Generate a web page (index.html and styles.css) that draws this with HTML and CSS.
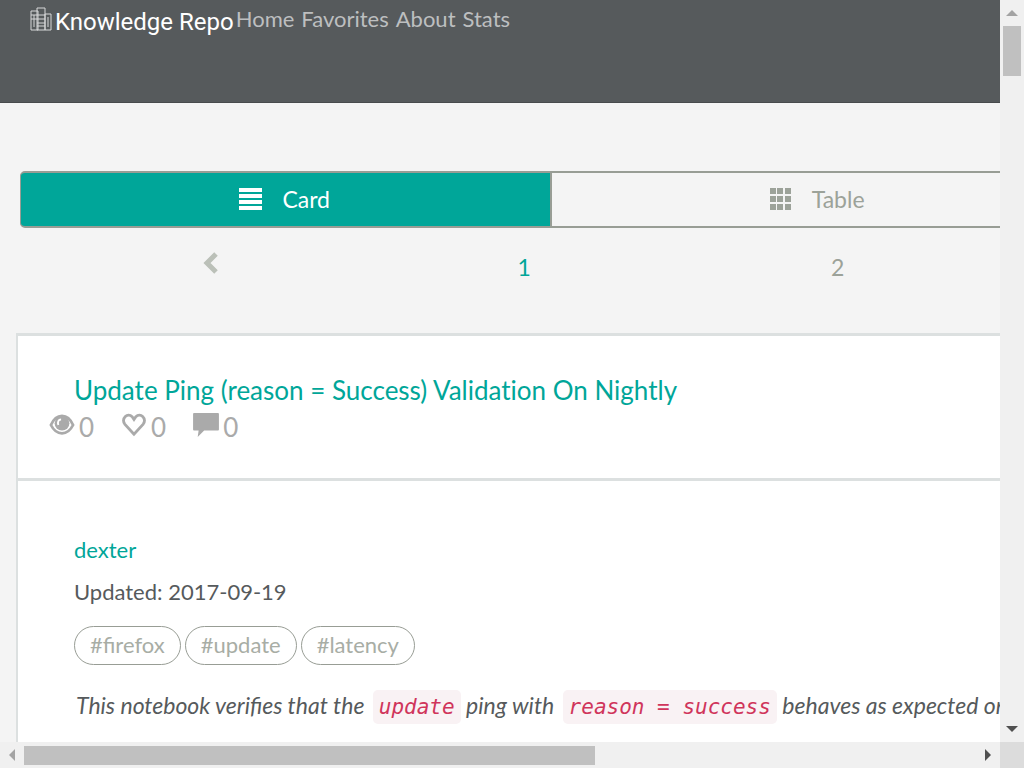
FILE: index.html
```html
<!DOCTYPE html>
<html lang="en">
<head>
<meta charset="utf-8">
<title>Knowledge Repo</title>
<link rel="stylesheet" href="styles.css">
</head>
<body>
<div class="window">
  <div class="page">
    <header class="navbar">
      <a class="brand" href="#">
        <svg class="brand-icon" viewBox="0 0 22 24" aria-hidden="true">
          <path d="M1 4h7v19H1zM7 1h8v22H7zM15 7h6v16h-6zM1 8h14M1 12h14M7 16h8M7 19h8M4 8v12M18 10v10"/>
        </svg>
        <span>Knowledge Repo</span>
      </a>
      <nav class="links">
        <a href="#">Home</a>
        <a href="#">Favorites</a>
        <a href="#">About</a>
        <a href="#">Stats</a>
      </nav>
    </header>
    <main class="content">
      <div class="toggle">
        <button class="view active" type="button">
          <svg class="view-icon" viewBox="0 0 24 24" aria-hidden="true"><path d="M0 1h23v4H0zM0 7h23v4H0zM0 13h23v4H0zM0 19h23v4H0z"/></svg>
          Card
        </button>
        <button class="view" type="button">
          <svg class="view-icon" viewBox="0 0 24 24" aria-hidden="true"><path d="M1 1h6v6H1zM8 1h6v6H8zM16 1h6v6h-6zM1 9h6v6H1zM8 9h6v6H8zM16 9h6v6h-6zM1 17h6v6H1zM8 17h6v6H8zM16 17h6v6h-6z"/></svg>
          Table
        </button>
      </div>
      <nav class="pager" aria-label="Pages">
        <a class="previous" href="#" aria-label="Previous page">
          <svg class="chevron" viewBox="0 0 16 22" aria-hidden="true"><path d="M13 2L4 11l9 9"/></svg>
        </a>
        <a class="current" href="#">1</a>
        <a href="#">2</a>
      </nav>
      <article class="post">
        <div class="post-head">
          <h2 class="post-title"><a href="#">Update Ping (reason = Success) Validation On Nightly</a></h2>
          <ul class="stats">
            <li>
              <svg class="stat-icon" viewBox="0 0 28 26" aria-hidden="true">
                <path fill="none" stroke="currentColor" stroke-width="3" d="M2 13C5 6 9 3 14 3s9 3 12 10c-3 6-7 9-12 9S5 19 2 13z"/>
                <circle cx="14" cy="11" r="8"/>
                <path fill="none" stroke="#fff" stroke-width="2" d="M13 7c-3 0-4 3-3 6"/>
              </svg>0
            </li>
            <li>
              <svg class="stat-icon" viewBox="0 0 28 26" aria-hidden="true">
                <path fill="none" stroke="currentColor" stroke-width="3" d="M14 23L4 12C0 6 7-1 12 4l2 3 2-3c5-5 12 2 8 8z"/>
              </svg>0
            </li>
            <li>
              <svg class="stat-icon" viewBox="0 0 28 26" aria-hidden="true">
                <path d="M1 0h26q1 0 1 1v17q0 1-1 1H12l-7 7 1-7H1q-1 0-1-1V1q0-1 1-1z"/>
              </svg>0
            </li>
          </ul>
        </div>
        <div class="post-body">
          <a class="author" href="#">dexter</a>
          <p class="updated">Updated: 2017-09-19</p>
          <div class="tags"><a href="#">#firefox</a><a href="#">#update</a><a href="#">#latency</a></div>
          <p class="summary">This notebook verifies that the <code>update</code> ping with <code>reason = success</code> behaves as expected on</p>
        </div>
      </article>
    </main>
  </div>
  <div class="scroll vertical">
    <button class="arrow" type="button" aria-label="Scroll up"><svg viewBox="0 0 12 8"><path fill="#a3a3a3" d="M0 7l6-6 6 6z"/></svg></button>
    <div class="track"><div class="thumb"></div></div>
    <button class="arrow" type="button" aria-label="Scroll down"><svg viewBox="0 0 12 8"><path fill="#505050" d="M0 1h12L6 7z"/></svg></button>
  </div>
  <div class="scroll horizontal">
    <button class="arrow" type="button" aria-label="Scroll left"><svg viewBox="0 0 8 12"><path fill="#a3a3a3" d="M7 0v12L1 6z"/></svg></button>
    <div class="track"><div class="thumb"></div></div>
    <button class="arrow" type="button" aria-label="Scroll right"><svg viewBox="0 0 8 12"><path fill="#505050" d="M1 0l6 6-6 6z"/></svg></button>
  </div>
  <div class="corner"></div>
</div>
</body>
</html>
```
FILE: styles.css
```css
* { box-sizing: border-box; }
body {
  margin: 0;
  background: #f4f4f4;
  color: #565a5c;
  font: 22px/32px Lato, sans-serif;
}
a { color: #00a699; text-decoration: none; }
button { font: inherit; cursor: pointer; }
svg { display: block; fill: currentColor; }

.window {
  display: grid;
  grid-template: minmax(0, 1fr) 26px / minmax(0, 1fr) 24px;
  height: 100vh;
}
.page { overflow: hidden; }

.navbar {
  display: flex;
  align-items: flex-start;
  gap: 2px;
  height: 103px;
  padding: 3px 30px;
  background: #565a5c;
  border-bottom: 1px solid #484b4d;
}
.brand {
  display: flex;
  gap: 3px;
  color: #fff;
  font: 24px/32px Roboto, sans-serif;
}
.brand span { padding-top: 3px; }
.brand-icon {
  width: 22px;
  height: 24px;
  margin-top: 4px;
  fill: none;
  stroke: #d6d7d8;
}
.links { display: flex; gap: 7px; }
.links a { color: #bdbfc0; }

.content { padding: 68px 0 0 16px; }

.toggle {
  display: grid;
  grid-template-columns: 54% 54%;
  margin: 0 -6px 0 4px;
}
.view {
  display: flex;
  align-items: center;
  justify-content: center;
  gap: 19px;
  height: 57px;
  padding: 0 2px 2px 0;
  border: 2px solid #989d95;
  border-left-width: 0;
  background: none;
  color: #9ca299;
  font-size: 23px;
}
.view.active {
  border-left-width: 1px;
  border-radius: 5px 0 0 5px;
  background: #00a699;
  color: #fff;
}
.view-icon { width: 24px; height: 24px; }

.pager {
  display: grid;
  grid-template-columns: repeat(3, 33%);
  margin: 23px -4px 0 38px;
  font-size: 23px;
  text-align: center;
}
.pager a { color: #9ca299; }
.pager .current { color: #00a699; }
.previous { display: flex; justify-content: center; }
.chevron {
  width: 16px;
  height: 22px;
  margin-top: 1px;
  fill: none;
  stroke: #bbc0b8;
  stroke-width: 5;
}

.post {
  width: 160%;
  margin-top: 50px;
  border: 2px solid #dce0e0;
  border-top-width: 3px;
  background: #fff;
}
.post-head {
  padding: 36px 31px 33px;
  border-bottom: 3px solid #dce0e0;
}
.post-title {
  margin: 0;
  padding-left: 25px;
  font-size: 26px;
  font-variant-ligatures: none;
  font-weight: 400;
  line-height: 36px;
}
.stats {
  display: flex;
  gap: 27px;
  margin: 0;
  padding: 1px 0 0;
  color: #aaa;
  font-size: 26px;
  line-height: 36px;
  list-style: none;
}
.stats li { display: flex; gap: 4px; }
.stat-icon { width: 26px; height: 24px; margin-top: 4px; }

.post-body { padding: 53px 56px; }
.author { display: block; }
.updated { margin: 10px 0 18px; }
.tags { display: flex; gap: 4px; }
.tags a {
  padding: 1px 15px 3px;
  border: 1px solid #989d95;
  border-radius: 20px;
  color: #a8ada5;
  line-height: 33px;
}
.summary {
  margin: 24px 0 0;
  padding-left: 2px;
  font-size: 23px;
  font-style: italic;
  white-space: nowrap;
}
code {
  margin-left: 3px;
  padding: 5px 6px;
  border-radius: 5px;
  background: #f9f2f4;
  color: #d0355b;
  font: italic 21px "DejaVu Sans Mono", monospace;
}

.scroll { display: flex; background: #f0f0f0; }
.vertical { flex-direction: column; }
.arrow {
  display: flex;
  align-items: center;
  justify-content: center;
  flex: none;
  width: 24px;
  height: 26px;
  padding: 0;
  border: 0;
  background: none;
}
.vertical .arrow svg { width: 12px; height: 8px; }
.horizontal .arrow svg { width: 8px; height: 12px; }
.track { flex: 1; }
.thumb { background: #c0c0c0; }
.vertical .thumb { width: 18px; height: 50px; margin-left: 3px; }
.horizontal .thumb { width: 60%; height: 19px; margin-top: 4px; }
.corner { background: #dcdcdc; }
```
